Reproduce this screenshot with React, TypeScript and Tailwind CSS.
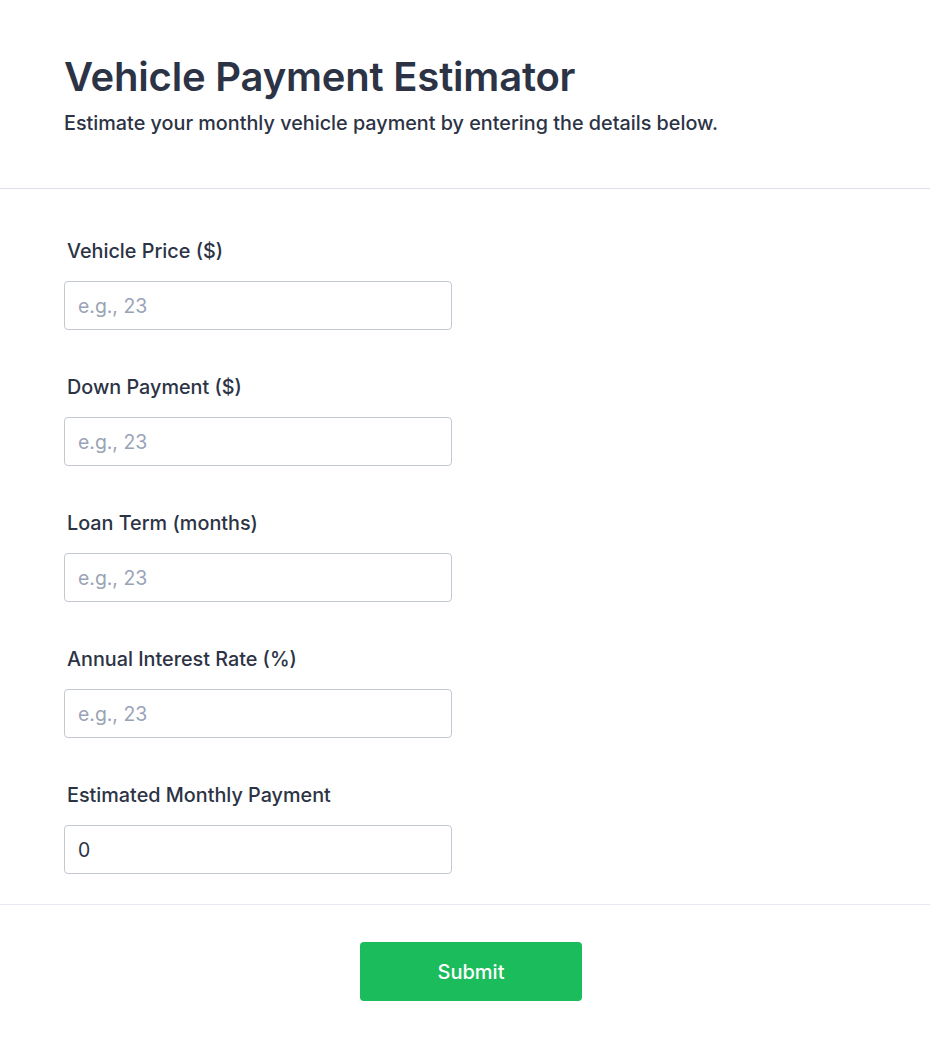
import React from "react";

const fields = [
  { label: "Vehicle Price ($)", placeholder: "e.g., 23" },
  { label: "Down Payment ($)", placeholder: "e.g., 23" },
  { label: "Loan Term (months)", placeholder: "e.g., 23" },
  { label: "Annual Interest Rate (%)", placeholder: "e.g., 23" },
];

export default function App() {
  return (
    <div className="min-h-screen bg-white text-[#2c3345] font-['Inter','Liberation_Sans',sans-serif]">
      {/* Header */}
      <div className="px-16 pt-[53px] pb-[51px] border-b border-[#e0e0ea]">
        <h1 className="text-[40px] leading-[48px] font-semibold tracking-[-0.2px]">
          Vehicle Payment Estimator
        </h1>
        <p className="mt-[8px] text-[19.8px] leading-7 font-medium">
          Estimate your monthly vehicle payment by entering the details below.
        </p>
      </div>

      {/* Fields */}
      <div className="px-16 pt-[48px] pb-[30px] border-b border-[#e6e9f0] flex flex-col gap-[43px]">
        {fields.map((f) => (
          <div key={f.label} className="flex flex-col">
            <label className="pl-[3px] text-[19.8px] leading-7 font-medium">{f.label}</label>
            <input
              type="text"
              placeholder={f.placeholder}
              className="mt-4 w-[388px] h-[49px] px-[13px] rounded border border-[#c3c8d1] text-[19.4px] text-[#2c3345] placeholder:text-[#98a3b6] outline-none"
            />
          </div>
        ))}
        <div className="flex flex-col">
          <label className="pl-[3px] text-[19.8px] leading-7 font-medium">Estimated Monthly Payment</label>
          <input
            type="text"
            defaultValue="0"
            readOnly
            className="mt-4 w-[388px] h-[49px] px-[13px] rounded border border-[#c3c8d1] text-[19.4px] text-[#2c3345] outline-none"
          />
        </div>
      </div>

      {/* Footer */}
      <div className="flex justify-center pl-3 pt-[37px] pb-[50px]">
        <button className="w-[222px] h-[59px] rounded bg-[#1abc5c] text-white text-xl font-medium">
          Submit
        </button>
      </div>
    </div>
  );
}
